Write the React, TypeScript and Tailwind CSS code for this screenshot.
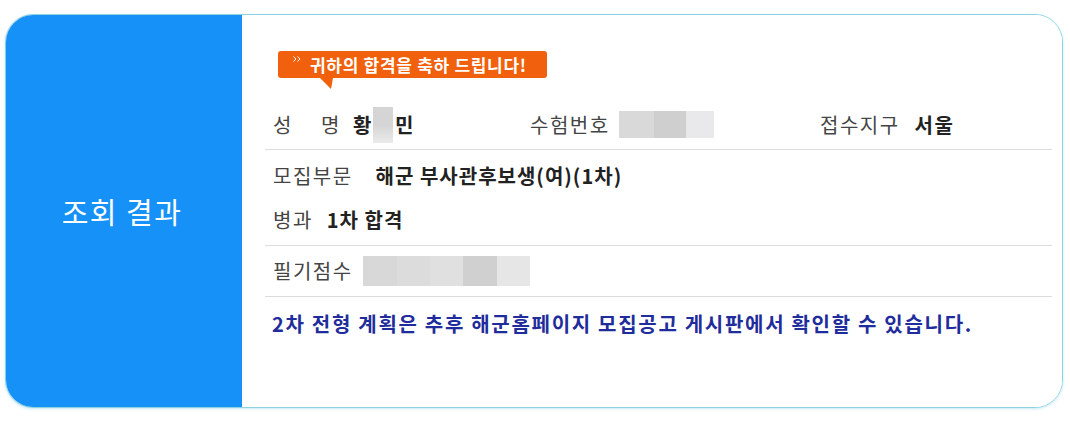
import React from "react";

const font = { fontFamily: '"Noto Sans CJK KR", "Noto Sans", sans-serif' };

export default function App() {
  return (
    <div className="w-[1070px] h-[422px] bg-white pt-[14px] pl-[5px]" style={font}>
      <div className="flex w-[1058px] h-[394px] rounded-[28px] border border-[#8ed2df] overflow-hidden shadow-[0_1px_3px_rgba(90,190,215,0.35)]">
        <div className="w-[236px] bg-[#1591f7] flex items-center justify-center">
          <span className="text-white text-[29px] tracking-[1.5px] leading-none pr-[4px]">조회 결과</span>
        </div>
        <div className="flex-1 bg-white pl-[23px] pr-[10px] pt-[36px]">
          {/* badge */}
          <div className="relative ml-[13px] flex h-[27px] w-[269px] items-center rounded-[3px] bg-[#f0600d] pl-[15px]">
            <svg className="-mt-[12px] mr-[9px]" width="8" height="6" viewBox="0 0 8 6">
              <polyline points="0.5,0.5 3,3 0.5,5.5" fill="none" stroke="#ffffff" strokeWidth="1" />
              <polyline points="4.5,0.5 7,3 4.5,5.5" fill="none" stroke="#ffffff" strokeWidth="1" />
            </svg>
            <span className="text-white text-[17px] font-bold leading-none tracking-[0.7px]">귀하의 합격을 축하 드립니다!</span>
            <svg className="absolute left-[42px] top-[27px]" width="13" height="11" viewBox="0 0 13 11">
              <polygon points="0,0 13,0 11,11" fill="#f0600d" />
            </svg>
          </div>

          {/* row 1 */}
          <div className="mt-[22px] flex h-[50px] items-center pl-[8px] text-[20px] tracking-[1.5px] text-[#444] border-b border-[#dcdcdc]">
            <div className="flex w-[257px] items-center">
              <span className="w-[48px]">성</span>
              <span className="w-[32px]">명</span>
              <span className="font-semibold text-[#222]">황</span>
              <span className="h-[36px] w-[20px] bg-gradient-to-b from-[#d5d5d5] via-[#d5d5d5] to-[#ebebeb]" />
              <span className="font-semibold text-[#222] ml-[2px]">민</span>
            </div>
            <div className="flex w-[290px] items-center">
              <span>수험번호</span>
              <div className="ml-[9px] flex h-[27px]">
                <span className="w-[35px] bg-[#d9d9d9]" />
                <span className="w-[32px] bg-[#cfcfcf]" />
                <span className="w-[28px] bg-[#e9e9eb]" />
              </div>
            </div>
            <div className="flex items-center">
              <span>접수지구</span>
              <span className="ml-[15px] font-semibold text-[#222]">서울</span>
            </div>
          </div>

          {/* section 2 */}
          <div className="pl-[8px] pt-[13px] pb-[12px] text-[20px] tracking-[1.5px] text-[#444] border-b border-[#dcdcdc]">
            <div className="flex h-[26px] items-center">
              <span>모집부문</span>
              <span className="ml-[23px] font-semibold tracking-[1px] text-[#222]">해군 부사관후보생(여)(1차)</span>
            </div>
            <div className="mt-[18px] flex h-[26px] items-center">
              <span>병과</span>
              <span className="ml-[14px] font-semibold tracking-[1px] text-[#222]">1차 합격</span>
            </div>
          </div>

          {/* row 3 */}
          <div className="flex h-[51px] items-center pl-[8px] text-[20px] tracking-[1.5px] text-[#444] border-b border-[#dcdcdc]">
            <span>필기점수</span>
            <div className="ml-[10px] flex h-[30px]">
              <span className="w-[34px] bg-[#d8d8d8]" />
              <span className="w-[33px] bg-[#dcdcdc]" />
              <span className="w-[33px] bg-[#e0e0e0]" />
              <span className="w-[34px] bg-[#d0d0d0]" />
              <span className="w-[33px] bg-[#e6e6e6]" />
            </div>
          </div>

          {/* notice */}
          <div className="pl-[7px] pt-[15px] text-[20px] leading-[24px] font-semibold tracking-[1.7px] text-[#1f2d9c]">
            2차 전형 계획은 추후 해군홈페이지 모집공고 게시판에서 확인할 수 있습니다.
          </div>
        </div>
      </div>
    </div>
  );
}
